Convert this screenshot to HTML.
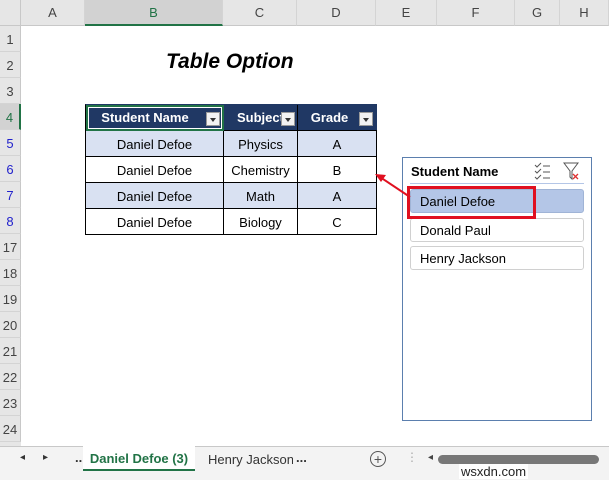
<!DOCTYPE html><html><head><style>
body{margin:0;width:609px;height:480px;overflow:hidden;background:#fff;font-family:"Liberation Sans",sans-serif;position:relative}
.a{position:absolute;white-space:nowrap}
.ch{top:0;height:26px;background:#e6e6e6;border-right:1px solid #d4d4d4;border-bottom:1px solid #c8c8c8;box-sizing:border-box;text-align:center;line-height:26px;font-size:13px;color:#444}
.rh{left:0;width:21px;height:26px;background:#e6e6e6;border-bottom:1px solid #d4d4d4;border-right:1px solid #c8c8c8;box-sizing:border-box;text-align:center;line-height:28px;font-size:13px;color:#444}
.c{height:26px;line-height:28px;text-align:center;font-size:13px;color:#000;box-sizing:border-box;border-right:1px solid #000;border-bottom:1px solid #000;white-space:nowrap}
.h{background:#203864;color:#fff;font-weight:bold;line-height:26px}
.dd{position:absolute;top:7px;width:14px;height:14px;background:#f2f2f2;border:1px solid #999;box-sizing:border-box}
.dd:after{content:"";position:absolute;left:3px;top:5px;border:3px solid transparent;border-top:4px solid #333}
.it{left:410px;width:174px;height:24px;border:1px solid #d0d0d0;border-radius:3px;box-sizing:border-box;font-size:13px;line-height:23px;padding-left:9px}
</style></head><body>
<div class="a" style="left:0;top:0;width:21px;height:26px;background:#e6e6e6;border-right:1px solid #c8c8c8;border-bottom:1px solid #c8c8c8;box-sizing:border-box"></div>
<div class="a ch" style="left:21px;width:64px">A</div>
<div class="a ch" style="left:85px;width:138px;background:#d2d2d2;color:#217346;border-bottom:2px solid #217346">B</div>
<div class="a ch" style="left:223px;width:74px">C</div>
<div class="a ch" style="left:297px;width:79px">D</div>
<div class="a ch" style="left:376px;width:61px">E</div>
<div class="a ch" style="left:437px;width:78px">F</div>
<div class="a ch" style="left:515px;width:45px">G</div>
<div class="a ch" style="left:560px;width:49px">H</div>
<div class="a rh" style="top:26px">1</div>
<div class="a rh" style="top:52px">2</div>
<div class="a rh" style="top:78px">3</div>
<div class="a rh" style="top:104px;background:#d2d2d2;color:#217346;border-right:2px solid #217346">4</div>
<div class="a rh" style="top:130px;color:#2222cc">5</div>
<div class="a rh" style="top:156px;color:#2222cc">6</div>
<div class="a rh" style="top:182px;color:#2222cc">7</div>
<div class="a rh" style="top:208px;color:#2222cc">8</div>
<div class="a rh" style="top:234px">17</div>
<div class="a rh" style="top:260px">18</div>
<div class="a rh" style="top:286px">19</div>
<div class="a rh" style="top:312px">20</div>
<div class="a rh" style="top:338px">21</div>
<div class="a rh" style="top:364px">22</div>
<div class="a rh" style="top:390px">23</div>
<div class="a rh" style="top:416px">24</div>
<div class="a" style="left:0;top:442px;width:21px;height:4px;background:#e6e6e6"></div>
<div class="a" style="left:166px;top:50px;font-size:21px;font-weight:bold;font-style:italic">Table Option</div>
<div class="a" style="left:85px;top:104px;border-left:1px solid #000;border-top:1px solid #203864">
<div style="display:flex"><div class="c h" style="width:138px;position:relative;padding-right:20px;border:2px solid #217346;line-height:22px;outline:1px solid #fff;outline-offset:-3px">Student Name<div class="dd" style="left:118px;top:5px"></div></div><div class="c h" style="width:74px;position:relative;text-align:left;padding-left:13px;overflow:hidden">Subject<div class="dd" style="left:57px"></div></div><div class="c h" style="width:79px;position:relative;padding-right:16px;border-right:none">Grade<div class="dd" style="left:61px"></div></div></div>
<div style="display:flex;background:#d9e1f2"><div class="c" style="width:138px">Daniel Defoe</div><div class="c" style="width:74px">Physics</div><div class="c" style="width:79px">A</div></div>
<div style="display:flex"><div class="c" style="width:138px">Daniel Defoe</div><div class="c" style="width:74px">Chemistry</div><div class="c" style="width:79px">B</div></div>
<div style="display:flex;background:#d9e1f2"><div class="c" style="width:138px">Daniel Defoe</div><div class="c" style="width:74px">Math</div><div class="c" style="width:79px">A</div></div>
<div style="display:flex"><div class="c" style="width:138px">Daniel Defoe</div><div class="c" style="width:74px">Biology</div><div class="c" style="width:79px">C</div></div>
</div>
<div class="a" style="left:402px;top:157px;width:190px;height:264px;border:1px solid #5b7fae;box-sizing:border-box"></div>
<div class="a" style="left:411px;top:164px;font-size:13px;font-weight:bold">Student Name</div>
<div class="a" style="left:410px;top:183px;width:174px;height:1px;background:#b4c6e7"></div>
<svg class="a" style="left:533px;top:161px" width="60" height="22"><g stroke="#555" fill="none" stroke-width="1"><path d="M2 4l2 2 4-4M2 10l2 2 4-4M2 16l2 2 4-4M10 5h7M10 11h7M10 17h7"/><path d="M31 2h14l-6 8v8l-2-2v-6z"/></g><path d="M40 13l5 5M45 13l-5 5" stroke="#e03030" stroke-width="1.3"/></svg>
<div class="a it" style="top:189px;background:#b4c6e7;border-color:#a0b4d6">Daniel Defoe</div>
<div class="a it" style="top:218px">Donald Paul</div>
<div class="a it" style="top:246px">Henry Jackson</div>
<div class="a" style="left:407px;top:186px;width:129px;height:33px;border:3px solid #e01020;box-sizing:border-box"></div>
<svg class="a" style="left:370px;top:165px" width="45" height="40"><path d="M40 32L10 12" stroke="#e01020" stroke-width="2"/><path d="M5 9l11 1-5 7z" fill="#e01020"/></svg>
<div class="a" style="left:0;top:446px;width:609px;height:26px;background:#f3f3f3;border-top:1px solid #c8c8c8;box-sizing:border-box"></div>
<div class="a" style="left:20px;top:452px;font-size:10px;color:#333">◂</div>
<div class="a" style="left:43px;top:452px;font-size:10px;color:#333">▸</div>
<div class="a" style="left:75px;top:450px;font-size:13px;font-weight:bold;color:#333">...</div>
<div class="a" style="left:83px;top:446px;width:112px;height:25px;background:#fff;border-bottom:2px solid #217346;box-sizing:border-box;font-size:13px;font-weight:bold;color:#217346;text-align:center;line-height:26px;overflow:hidden">Daniel Defoe (3)</div>
<div class="a" style="left:208px;top:452px;width:85px;overflow:hidden;font-size:13px;color:#333">Henry Jackson (3</div>
<div class="a" style="left:296px;top:450px;font-size:13px;font-weight:bold;color:#333">...</div>
<div class="a" style="left:370px;top:451px;width:14px;height:14px;border:1px solid #555;border-radius:50%;text-align:center;line-height:14px;font-size:14px;color:#555">+</div>
<div class="a" style="left:406px;top:450px;font-size:12px;color:#aaa">⋮</div>
<div class="a" style="left:428px;top:452px;font-size:10px;color:#444">◂</div>
<div class="a" style="left:438px;top:455px;width:161px;height:9px;background:#777;border-radius:5px"></div>
<div class="a" style="left:0;top:472px;width:609px;height:8px;background:#f3f3f3"></div>
<div class="a" style="left:459px;top:464px;font-size:13px;color:#222;background:#fff;padding:0 2px">wsxdn.com</div>
</body></html>
